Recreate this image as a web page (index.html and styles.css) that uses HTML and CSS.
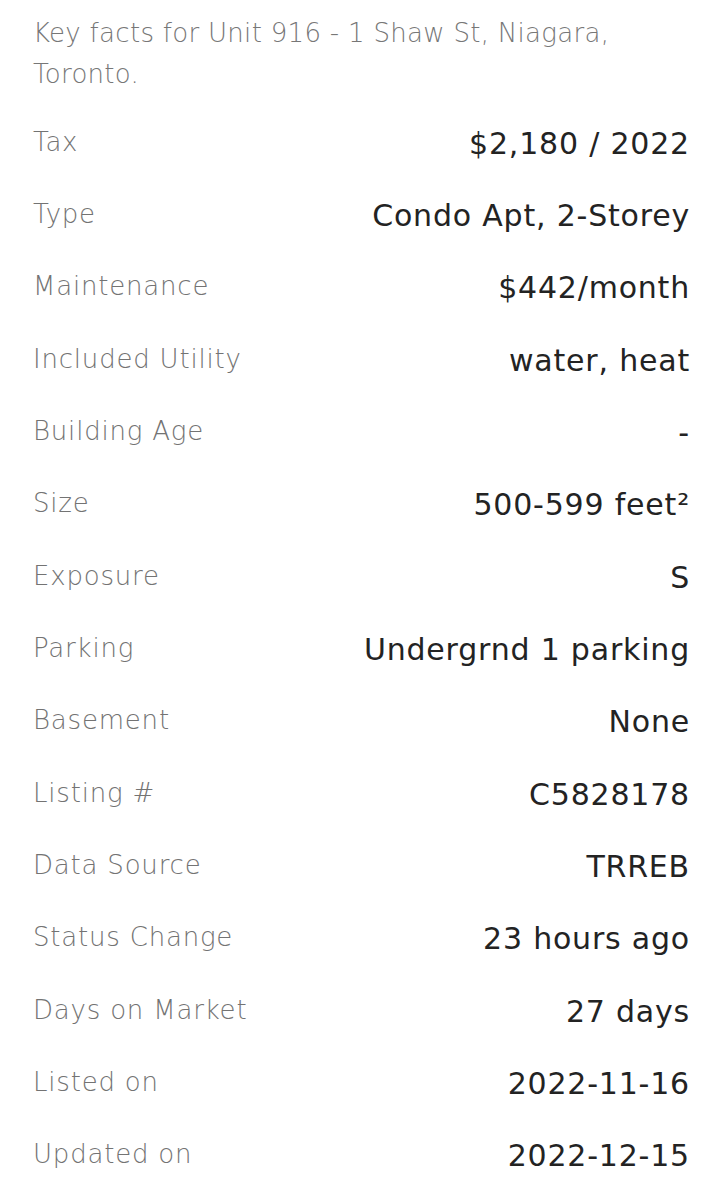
FILE: index.html
```html
<html>
  <head>
    <title>Key facts</title>
    <meta charset="utf-8" />
    <meta name="viewport" content="width=device-width" />
    <link rel="stylesheet" href="styles.css">
  </head>
  <body>
    <p class="intro">Key facts for Unit 916 - 1 Shaw St, Niagara, Toronto.</p>

    <div class="facts">
      <div class="row"><span class="label">Tax</span><span class="value">$2,180 / 2022</span></div>
      <div class="row"><span class="label">Type</span><span class="value">Condo Apt, 2-Storey</span></div>
      <div class="row"><span class="label">Maintenance</span><span class="value">$442/month</span></div>
      <div class="row"><span class="label">Included Utility</span><span class="value">water, heat</span></div>
      <div class="row"><span class="label">Building Age</span><span class="value">-</span></div>
      <div class="row"><span class="label">Size</span><span class="value">500-599 feet²</span></div>
      <div class="row"><span class="label">Exposure</span><span class="value">S</span></div>
      <div class="row"><span class="label">Parking</span><span class="value">Undergrnd 1 parking</span></div>
      <div class="row"><span class="label">Basement</span><span class="value">None</span></div>
      <div class="row"><span class="label">Listing #</span><span class="value">C5828178</span></div>
      <div class="row"><span class="label">Data Source</span><span class="value">TRREB</span></div>
      <div class="row"><span class="label">Status Change</span><span class="value">23 hours ago</span></div>
      <div class="row"><span class="label">Days on Market</span><span class="value">27 days</span></div>
      <div class="row"><span class="label">Listed on</span><span class="value">2022-11-16</span></div>
      <div class="row"><span class="label">Updated on</span><span class="value">2022-12-15</span></div>
    </div>
  </body>
</html>
```

FILE: styles.css
```css
body {
  margin: 0;
  padding: 13px 33px 0;
  background: #fff;
  font-family: "DejaVu Sans", sans-serif;
}

.intro {
  margin: 0;
  font-size: 26px;
  font-weight: 300;
  line-height: 41px;
  color: #777;
  letter-spacing: 0.3px;
}

.facts {
  margin-top: 12px;
}

.row {
  display: flex;
  justify-content: space-between;
  align-items: center;
  height: 72.35px;
}

.label {
  font-size: 26px;
  font-weight: 300;
  color: #737373;
  letter-spacing: 0.8px;
  margin-top: -3px;
}

.value {
  font-size: 30px;
  font-weight: 400;
  color: #232323;
  letter-spacing: 0.8px;
}
```
